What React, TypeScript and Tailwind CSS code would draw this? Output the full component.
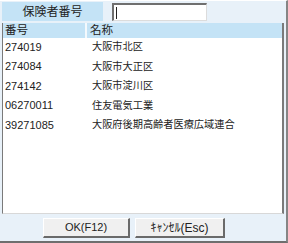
import React from 'react';

const ROWS = [
  { code: '274019', name: '大阪市北区' },
  { code: '274084', name: '大阪市大正区' },
  { code: '274142', name: '大阪市淀川区' },
  { code: '06270011', name: '住友電気工業' },
  { code: '39271085', name: '大阪府後期高齢者医療広域連合' },
];

const font = { fontFamily: '"Liberation Sans", "Noto Sans CJK JP", sans-serif' };

export default function App() {
  return (
    <div
      className="w-[288px] h-[243px] bg-[#e8f1f9] border-t border-t-white border-r-2 border-r-[#858585] border-b-2 border-b-[#6e6e6e] text-[11px] text-[#222] flex flex-col"
      style={font}
    >
      {/* 検索行 */}
      <div className="flex items-start pl-[2px] pt-[1px] h-[22px]">
        <div className="w-[101px] h-[19px] bg-[#c4e3f6] flex items-center justify-center text-[12px]">
          保険者番号
        </div>
        <div className="ml-[9px] mt-[1px] w-[95px] h-[18px] bg-white border-t-2 border-l-2 border-t-[#6f6f6f] border-l-[#6f6f6f] border-b border-r border-b-[#dcdcdc] border-r-[#dcdcdc] flex items-center pl-[2px]">
          <div className="w-[1px] h-[12px] bg-[#222]" />
        </div>
      </div>

      {/* 一覧 */}
      <div className="ml-[2px] w-[282px] h-[191px] bg-white border-l border-l-[#7a7a7a] border-r-2 border-r-[#7a7a7a] border-b border-b-[#d8d8d8] flex flex-col">
        <div className="h-[15px] bg-[#c4e3f6] flex items-center text-[11.5px]">
          <div className="w-[84px] h-full border-r-2 border-r-[#f4f9fd] pl-[2px] flex items-center">番号</div>
          <div className="pl-[3px]">名称</div>
        </div>
        <div className="flex flex-col -mt-[1px]">
          {ROWS.map((r) => (
            <div key={r.code} className="h-[19.5px] flex items-center">
              <div className="w-[86px] pl-[2px]">{r.code}</div>
              <div className="pl-[3px] text-[10.2px]">{r.name}</div>
            </div>
          ))}
        </div>
      </div>

      {/* ボタン */}
      <div className="flex gap-[5px] pl-[43px] pt-[4px]">
        <button className="w-[87px] h-[20px] bg-[#f0f0f0] border-t border-l border-t-white border-l-white border-b-2 border-r-2 border-b-[#6a6a6a] border-r-[#6a6a6a] text-[11px] flex items-center justify-center">
          OK(F12)
        </button>
        <button className="w-[90px] h-[20px] bg-[#f0f0f0] border-t border-l border-t-white border-l-white border-b-2 border-r-2 border-b-[#6a6a6a] border-r-[#6a6a6a] text-[12px] flex items-center justify-center">
          ｷｬﾝｾﾙ(Esc)
        </button>
      </div>
    </div>
  );
}
